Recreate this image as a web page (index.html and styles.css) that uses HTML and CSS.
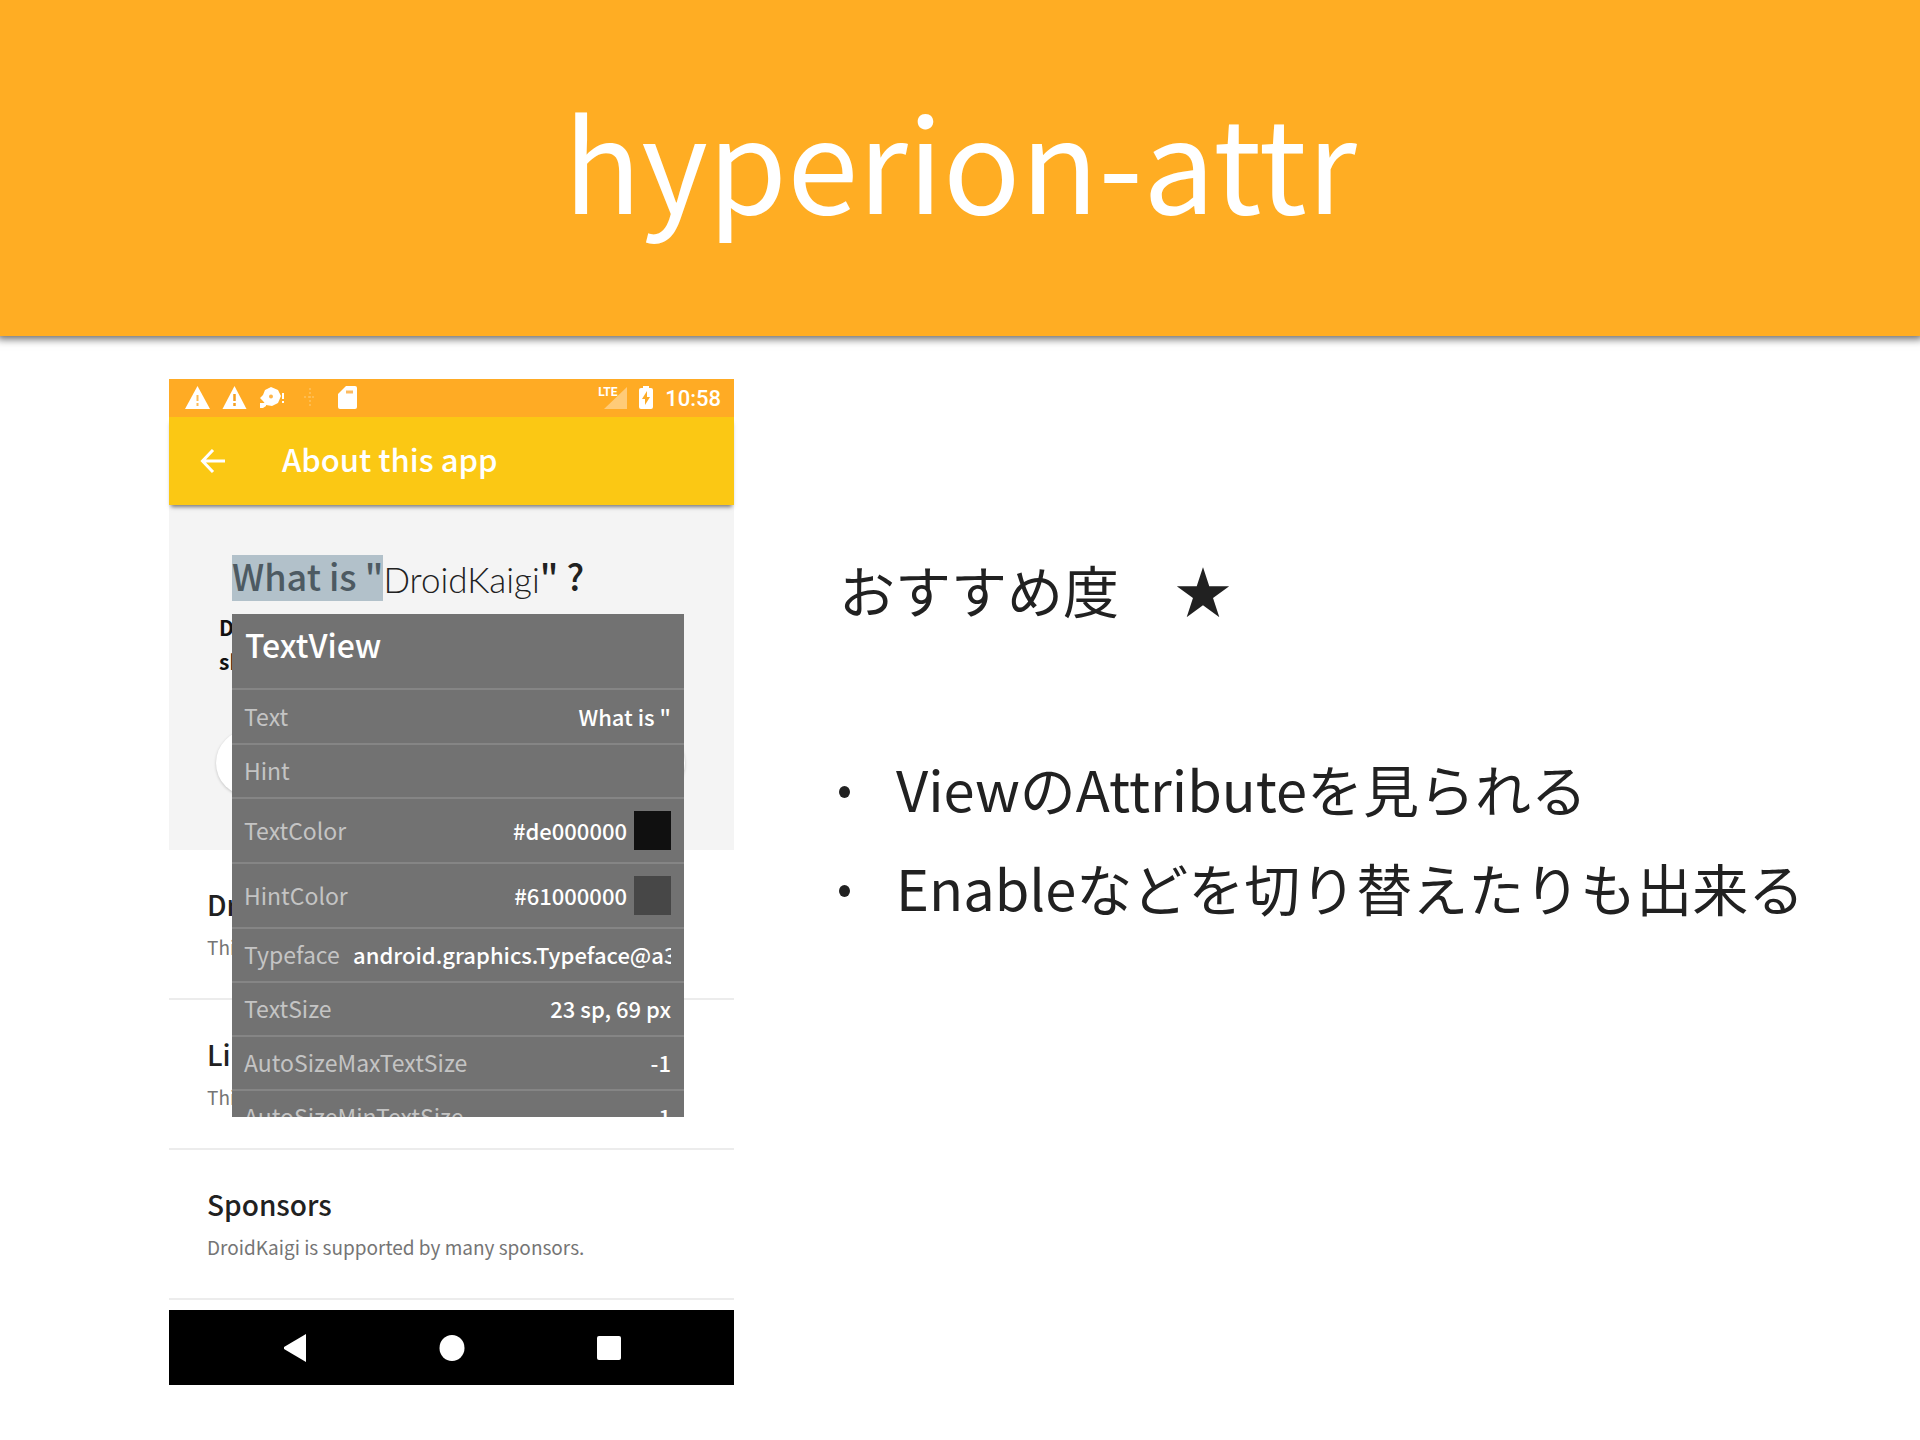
FILE: index.html
```html
<!DOCTYPE html>
<html lang="ja">
<head>
<meta charset="utf-8">
<meta name="viewport" content="width=device-width, initial-scale=1">
<title>hyperion-attr</title>
<link rel="stylesheet" href="styles.css">
</head>
<body>
<header class="slide-header">
  <h1>hyperion-attr</h1>
</header>
<main class="slide-body">
  <section class="phone" lang="en">
    <div class="status-bar">
      <div class="status-group">
        <svg width="25" height="24" viewBox="0 0 25 24"><path fill="#fff" d="M12.500 0 25 23H0Z"/><path stroke="#fdbb55" stroke-width="2" d="M12.500 9v6M12.500 17v3"/></svg>
        <svg width="25" height="24" viewBox="0 0 25 24"><path fill="#fff" d="M12.500 0 24.500 23H.5Z"/><path stroke="#f5a020" stroke-width="2.500" d="M12.500 8v7M12.500 17v3"/></svg>
        <svg width="26" height="24" viewBox="0 0 26 24"><path fill="#fff" d="M12 1 19 4 22 10 19 17 13 20 7 19 4 15 1 12 4 9 6 4Z"/><path fill="#fff" d="M1 17h6v3l-3 2H1v-3ZM23 7h2v6h-2ZM23 15h2v2h-2Z"/><circle cx="12" cy="10.500" r="2" fill="#fdb54a"/></svg>
        <svg width="25" height="24" viewBox="0 0 25 24"><path stroke="#ffc25c" stroke-width="1.500" stroke-dasharray="2 2" d="M13 2v20M7 11h12"/></svg>
        <svg width="25" height="24" viewBox="0 0 25 24"><path fill="#fff" d="M12 0h9q2 0 2 2v19q0 2-2 2H6q-2 0-2-2V8Z"/><path stroke="#fdbb60" stroke-width="3" d="M12 6h7"/></svg>
      </div>
      <div class="status-group">
        <div class="signal">
          <svg width="28" height="24" viewBox="0 0 28 24"><path fill="#ffcb78" d="M28 1V23H5Z"/></svg>
          <span class="network">LTE</span>
        </div>
        <svg width="14" height="24" viewBox="0 0 14 24"><path fill="#fff" d="M4 0h6v2h2q2 0 2 2v17q0 2-2 2H2q-2 0-2-2V4q0-2 2-2h2Z"/><path fill="#fdab25" d="M8 5 3 13h3v6l5-8H8Z"/></svg>
        <time class="clock">10:58</time>
      </div>
    </div>
    <div class="app-bar">
      <button aria-label="Back"><svg width="26" height="24" viewBox="0 0 26 24"><path fill="none" stroke="#fff" stroke-width="3" d="M25 12H3M13 1 2.500 12 13 23"/></svg></button>
      <h2>About this app</h2>
    </div>
    <div class="intro">
      <h3 class="question"><span class="selected">What is "</span><span class="wordmark">DroidKaigi</span><span class="rest">" ?</span></h3>
      <p class="summary">D<br>sh</p>
      <div class="pill"></div>
    </div>
    <ul class="links">
      <li><h4>Dr</h4><p>Thi</p></li>
      <li><h4>Li</h4><p>Thi</p></li>
      <li><h4>Sponsors</h4><p>DroidKaigi is supported by many sponsors.</p></li>
    </ul>
    <nav class="nav-bar">
      <button aria-label="Back"><svg width="26" height="28" viewBox="0 0 26 28"><path fill="#fff" d="M24 0v28L2 15v-2Z"/></svg></button>
      <button aria-label="Home"><svg width="26" height="28" viewBox="0 0 26 28"><ellipse cx="13" cy="14" rx="12.500" ry="13" fill="#fff"/></svg></button>
      <button aria-label="Overview"><svg width="26" height="28" viewBox="0 0 26 28"><rect x="1" y="2" width="24" height="24" rx="2" fill="#fff"/></svg></button>
    </nav>
    <div class="inspector">
      <table>
        <caption>TextView</caption>
        <tbody>
          <tr><th scope="row">Text</th><td>What is "</td></tr>
          <tr><th scope="row">Hint</th><td></td></tr>
          <tr class="color-row"><th scope="row">TextColor</th><td class="color">#de000000<i class="swatch swatch-text"></i></td></tr>
          <tr class="color-row"><th scope="row">HintColor</th><td class="color">#61000000<i class="swatch swatch-hint"></i></td></tr>
          <tr><th scope="row">Typeface</th><td class="cut">android.graphics.Typeface@a3</td></tr>
          <tr><th scope="row">TextSize</th><td>23 sp, 69 px</td></tr>
          <tr><th scope="row">AutoSizeMaxTextSize</th><td>-1</td></tr>
          <tr><th scope="row">AutoSizeMinTextSize</th><td>-1</td></tr>
        </tbody>
      </table>
    </div>
  </section>
  <section class="notes">
    <p>おすすめ度　★</p>
    <ul>
      <li>ViewのAttributeを見られる</li>
      <li>Enableなどを切り替えたりも出来る</li>
    </ul>
  </section>
</main>
</body>
</html>
```
FILE: styles.css
```css
* { box-sizing: border-box; }

body {
  margin: 0;
  background: #fff;
  color: #212121;
  font-family: "Noto Sans CJK JP", "Noto Sans", sans-serif;
}

h1, h2, h3, h4, p, ul { margin: 0; padding: 0; font-weight: 500; }
ul { list-style: none; }
svg { display: block; flex: none; }
button { display: block; padding: 0; border: 0; background: none; }

.slide-header {
  display: flex;
  align-items: center;
  justify-content: center;
  height: 336px;
  padding-bottom: 19px;
  background: #ffad23;
  box-shadow: 0 0 8px 3px rgba(0, 0, 0, 0.6);
  color: #fff;
}
.slide-header h1 { font-size: 128px; line-height: 187px; font-weight: 400; }

.slide-body {
  display: grid;
  grid-template-columns: 565px 1fr;
  column-gap: 105px;
  padding: 43px 24px 54px 169px;
}

/* Device */
.phone { position: relative; }

.status-bar {
  display: flex;
  justify-content: space-between;
  align-items: center;
  height: 38px;
  padding: 0 13px 0 16px;
  background: #ffab24;
  color: #fff;
}
.status-group { display: flex; align-items: center; gap: 12px; }
.signal { position: relative; }
.network {
  position: absolute;
  top: -1px;
  left: -1px;
  font: 700 12px/14px Roboto, sans-serif;
}
.clock { padding-top: 2px; font: 500 22px/26px Roboto, sans-serif; }

.app-bar {
  display: flex;
  align-items: center;
  gap: 56px;
  height: 88px;
  padding: 0 31px;
  background: #fbc814;
  box-shadow: 0 4px 4px -2px rgba(0, 0, 0, 0.5);
  position: relative;
  color: #fff;
}
.app-bar h2 { padding-bottom: 4px; font-size: 31px; line-height: 44px; }

.intro { height: 345px; padding: 50px 48px 0; background: #f4f4f4; }
.question {
  display: flex;
  align-items: center;
  height: 46px;
  padding-left: 15px;
  font-size: 36px;
  line-height: 40px;
  white-space: pre;
}
.selected, .rest { padding-bottom: 6px; }
.selected { background: #b2c1ca; color: #4d5a62; }
.wordmark { font: 300 35px/46px Lato, sans-serif; padding-top: 2px; }
.summary {
  padding: 9px 2px 0;
  color: #111;
  font-size: 21px;
  line-height: 34px;
  font-weight: 700;
}
.pill {
  height: 66px;
  margin: 52px 1px 0 -1px;
  border-radius: 33px;
  background: #fff;
  box-shadow: 0 1px 3px rgba(0, 0, 0, 0.2);
}

.links { padding-bottom: 10px; }
.links li { padding: 34px 38px 37px; border-bottom: 2px solid #ececec; }
.links h4 { font-size: 28px; line-height: 40px; }
.links p { margin-top: 9px; color: #757575; font-size: 19px; line-height: 28px; font-weight: 400; }

.nav-bar {
  display: flex;
  justify-content: center;
  align-items: center;
  gap: 131px;
  height: 75px;
  background: #000;
}

/* Attribute panel floating over the app */
.inspector {
  position: absolute;
  top: 235px;
  left: 63px;
  width: 452px;
  height: 503px;
  overflow: hidden;
  background: #727272;
  color: #fff;
}
.inspector table, .inspector tbody, .inspector caption { display: block; }
.inspector caption {
  height: 74px;
  padding: 7px 13px;
  font-size: 32px;
  line-height: 46px;
  font-weight: 500;
  text-align: left;
}
.inspector tr {
  display: flex;
  justify-content: space-between;
  align-items: center;
  height: 54px;
  padding: 0 13px 2px 12px;
  border-top: 2px solid #858585;
}
.inspector tr:first-child { height: 55px; }
.inspector .color-row { height: 65px; padding-bottom: 0; }
.inspector th, .inspector td { padding: 0; line-height: 32px; white-space: nowrap; }
.inspector th { color: #c4c4c4; font-size: 23px; font-weight: 400; }
.inspector td { font-size: 22px; font-weight: 500; }
.inspector .color { display: flex; align-items: center; gap: 7px; }
.color-row th, .color-row td { margin-top: -1px; }
.swatch { width: 37px; height: 39px; }
.swatch-text { background: #101010; }
.swatch-hint { background: #474747; }
.inspector .cut { width: 318px; overflow: hidden; }

/* Talking points */
.notes { padding-top: 160px; font-size: 56px; line-height: 99px; white-space: nowrap; }
.notes p { font-weight: 400; }
.notes ul { padding-top: 100px; font-weight: 400; }
.notes li { display: flex; align-items: center; gap: 46px; }
.notes li::before { content: ""; width: 11px; height: 12px; margin-top: 8px; border-radius: 50%; background: currentColor; }
```
